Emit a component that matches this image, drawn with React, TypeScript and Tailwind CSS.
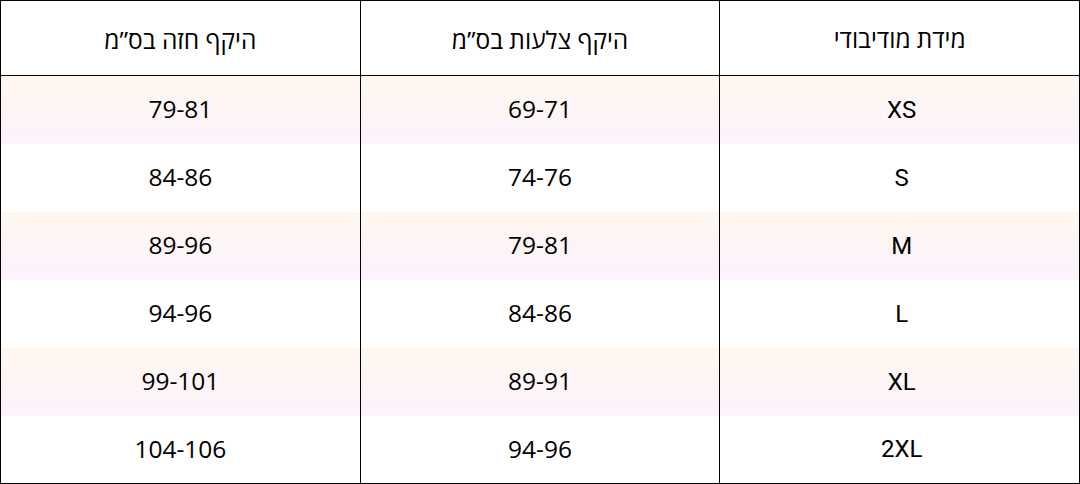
const ROWS = [
  { size: "XS", waist: "69-71", chest: "79-81" },
  { size: "S", waist: "74-76", chest: "84-86" },
  { size: "M", waist: "79-81", chest: "89-96" },
  { size: "L", waist: "84-86", chest: "94-96" },
  { size: "XL", waist: "89-91", chest: "99-101" },
  { size: "2XL", waist: "94-96", chest: "104-106" },
];

const sizeFont = "font-['Roboto','Open_Sans',sans-serif]";
const numFont = "font-['Open_Sans',sans-serif]";

export default function App() {
  return (
    <div className="w-[1080px] h-[484px] bg-white text-black" dir="rtl">
      <table className="w-full border-collapse border border-black table-fixed">
        <thead>
          <tr className="h-[75px] border-b border-black">
            <th className={`border-l border-black font-normal text-[24.5px] pt-1 ${sizeFont}`}>מידת מודיבודי</th>
            <th className={`border-l border-black font-normal text-[24.5px] pt-1 ${numFont}`}>היקף צלעות בס”מ</th>
            <th className={`font-normal text-[24.5px] pt-1 ${numFont}`}>היקף חזה בס”מ</th>
          </tr>
        </thead>
        <tbody>
          {ROWS.map((r, i) => (
            <tr
              key={r.size}
              className={i % 2 === 0 ? "h-[68px] bg-gradient-to-b from-[#fff7ef] to-[#fcf3fd]" : "h-[68px] bg-white"}
            >
              <td className={`border-l border-black text-center text-[24px] pl-1 ${sizeFont}`}>{r.size}</td>
              <td className={`border-l border-black text-center text-[24.5px] ${numFont}`}>{r.waist}</td>
              <td className={`text-center text-[24.5px] ${numFont}`}>{r.chest}</td>
            </tr>
          ))}
        </tbody>
      </table>
    </div>
  );
}
